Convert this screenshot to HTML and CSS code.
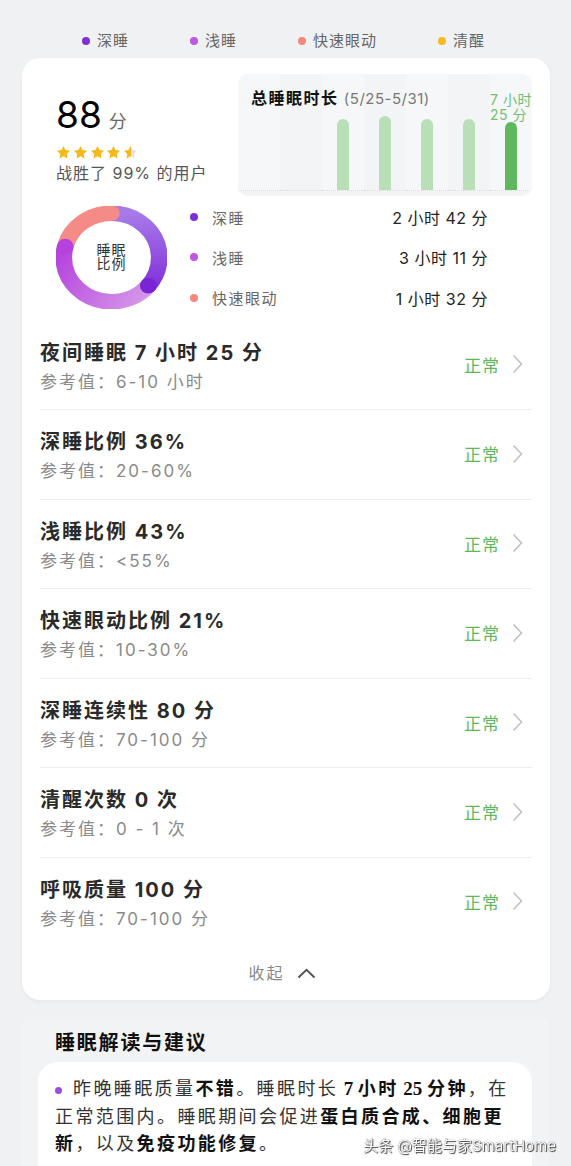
FILE: index.html
```html
<!DOCTYPE html>
<html>
<head>
  <title>睡眠报告</title>
  <meta charset="UTF-8">
  <meta name="viewport" content="width=device-width, initial-scale=1.0">
  <link rel="stylesheet" href="styles.css">
</head>
<body>
  <div class="legend">
    <span class="legend-item"><i class="dot deep"></i>深睡</span>
    <span class="legend-item"><i class="dot light"></i>浅睡</span>
    <span class="legend-item"><i class="dot rem"></i>快速眼动</span>
    <span class="legend-item"><i class="dot awake"></i>清醒</span>
  </div>

  <main class="card">
    <div class="summary">
      <div class="score">
        <div class="score-value">88<span class="unit">分</span></div>
        <div class="stars">
          <svg width="0" height="0" class="defs">
            <defs>
              <linearGradient id="half-star">
                <stop offset="55%" stop-color="#f6b91c"/>
                <stop offset="55%" stop-color="#e2e2e2"/>
              </linearGradient>
            </defs>
          </svg>
          <svg class="star" viewBox="0 0 24 24"><path d="M12 1.5l3.2 6.6 7.2 1-5.2 5.1 1.3 7.2L12 18l-6.5 3.4 1.3-7.2L1.6 9.1l7.2-1z"/></svg>
          <svg class="star" viewBox="0 0 24 24"><path d="M12 1.5l3.2 6.6 7.2 1-5.2 5.1 1.3 7.2L12 18l-6.5 3.4 1.3-7.2L1.6 9.1l7.2-1z"/></svg>
          <svg class="star" viewBox="0 0 24 24"><path d="M12 1.5l3.2 6.6 7.2 1-5.2 5.1 1.3 7.2L12 18l-6.5 3.4 1.3-7.2L1.6 9.1l7.2-1z"/></svg>
          <svg class="star" viewBox="0 0 24 24"><path d="M12 1.5l3.2 6.6 7.2 1-5.2 5.1 1.3 7.2L12 18l-6.5 3.4 1.3-7.2L1.6 9.1l7.2-1z"/></svg>
          <svg class="star half" viewBox="0 0 24 24"><path d="M12 1.5l3.2 6.6 7.2 1-5.2 5.1 1.3 7.2L12 18l-6.5 3.4 1.3-7.2L1.6 9.1l7.2-1z"/></svg>
        </div>
        <div class="beat">战胜了 99% 的用户</div>
      </div>

      <div class="chart">
        <div class="chart-title">总睡眠时长 <span class="range">(5/25-5/31)</span></div>
        <div class="chart-cols">
          <div class="col"></div>
          <div class="col"></div>
          <div class="col"><div class="bar" style="height: 71px"></div></div>
          <div class="col"><div class="bar" style="height: 74px"></div></div>
          <div class="col"><div class="bar" style="height: 71px"></div></div>
          <div class="col"><div class="bar" style="height: 71px"></div></div>
          <div class="col">
            <div class="bar-label">7 小时<br>25 分</div>
            <div class="bar today" style="height: 68px"></div>
          </div>
        </div>
      </div>
    </div>

    <div class="ratio">
      <div class="donut">
        <svg class="donut-ring" viewBox="0 0 100 100" preserveAspectRatio="none">
          <defs>
            <linearGradient id="deep-grad" x1="0" y1="0" x2="0" y2="1">
              <stop offset="0" stop-color="#a77ae9"/>
              <stop offset="1" stop-color="#7a22d6"/>
            </linearGradient>
            <linearGradient id="light-grad" x1="1" y1="1" x2="0" y2="0.3">
              <stop offset="0" stop-color="#d9a2ea"/>
              <stop offset="1" stop-color="#b43fdd"/>
            </linearGradient>
          </defs>
          <circle cx="50" cy="50" r="43" fill="none" stroke="url(#deep-grad)" stroke-width="15" stroke-dasharray="97.26 172.92" stroke-dashoffset="67.54"/>
          <circle cx="50" cy="50" r="43" fill="none" stroke="url(#light-grad)" stroke-width="15" stroke-dasharray="116.18 154" stroke-dashoffset="-29.72"/>
          <circle cx="50" cy="50" r="43" fill="none" stroke="#f58b86" stroke-width="15" stroke-dasharray="56.74 213.44" stroke-dashoffset="-145.9"/>
          <!-- round ends -->
          <circle cx="83.13" cy="77.41" r="7.5" fill="#7a24d7"/>
          <circle cx="8.35" cy="39.31" r="7.5" fill="#b642de"/>
          <circle cx="50" cy="7" r="7.5" fill="#f58b86"/>
        </svg>
        <div class="donut-text">睡眠<br>比例</div>
      </div>
      <ul class="ratio-list">
        <li><i class="dot deep"></i><span class="name">深睡</span><span class="value">2 小时 42 分</span></li>
        <li><i class="dot light"></i><span class="name">浅睡</span><span class="value">3 小时 11 分</span></li>
        <li><i class="dot rem"></i><span class="name">快速眼动</span><span class="value">1 小时 32 分</span></li>
      </ul>
    </div>

    <ul class="metrics">
      <li class="metric">
        <div><div class="metric-title">夜间睡眠 7 小时 25 分</div><div class="metric-ref">参考值：6-10 小时</div></div>
        <div class="status">正常<svg width="11" height="20" viewBox="0 0 11 20"><path d="M1.5 1.5L9.5 10L1.5 18.5"/></svg></div>
      </li>
      <li class="metric">
        <div><div class="metric-title">深睡比例 36%</div><div class="metric-ref">参考值：20-60%</div></div>
        <div class="status">正常<svg width="11" height="20" viewBox="0 0 11 20"><path d="M1.5 1.5L9.5 10L1.5 18.5"/></svg></div>
      </li>
      <li class="metric">
        <div><div class="metric-title">浅睡比例 43%</div><div class="metric-ref">参考值：&lt;55%</div></div>
        <div class="status">正常<svg width="11" height="20" viewBox="0 0 11 20"><path d="M1.5 1.5L9.5 10L1.5 18.5"/></svg></div>
      </li>
      <li class="metric">
        <div><div class="metric-title">快速眼动比例 21%</div><div class="metric-ref">参考值：10-30%</div></div>
        <div class="status">正常<svg width="11" height="20" viewBox="0 0 11 20"><path d="M1.5 1.5L9.5 10L1.5 18.5"/></svg></div>
      </li>
      <li class="metric">
        <div><div class="metric-title">深睡连续性 80 分</div><div class="metric-ref">参考值：70-100 分</div></div>
        <div class="status">正常<svg width="11" height="20" viewBox="0 0 11 20"><path d="M1.5 1.5L9.5 10L1.5 18.5"/></svg></div>
      </li>
      <li class="metric">
        <div><div class="metric-title">清醒次数 0 次</div><div class="metric-ref">参考值：0 - 1 次</div></div>
        <div class="status">正常<svg width="11" height="20" viewBox="0 0 11 20"><path d="M1.5 1.5L9.5 10L1.5 18.5"/></svg></div>
      </li>
      <li class="metric">
        <div><div class="metric-title">呼吸质量 100 分</div><div class="metric-ref">参考值：70-100 分</div></div>
        <div class="status">正常<svg width="11" height="20" viewBox="0 0 11 20"><path d="M1.5 1.5L9.5 10L1.5 18.5"/></svg></div>
      </li>
    </ul>

    <div class="collapse">收起<svg width="19" height="11" viewBox="0 0 19 11"><path d="M1.5 9.5L9.5 1.8L17.5 9.5"/></svg></div>
  </main>

  <section class="advice">
    <h2>睡眠解读与建议</h2>
    <div class="advice-card">
      <p><i class="bullet"></i>昨晚睡眠质量<b>不错</b>。睡眠时长 <b><span class="num">7</span> 小时 <span class="num">25</span> 分钟</b>，在正常范围内。睡眠期间会促进<b>蛋白质合成、细胞更新</b>，以及<b>免疫功能修复</b>。</p>
    </div>
  </section>

  <div class="watermark">头条 @智能与家SmartHome</div>
</body>
</html>
```

FILE: styles.css
```css
body {
  margin: 0;
  padding-top: 30px;
  background: #eff1f3;
  font-family: Inter, "Noto Sans CJK SC", sans-serif;
  color: #222;
}
ul {
  list-style: none;
  margin: 0;
  padding: 0;
}
.dot {
  display: inline-block;
  width: 8px;
  height: 8px;
  border-radius: 50%;
}
.dot.deep { background: #7d2fd8; }
.dot.light { background: #c057df; }
.dot.rem { background: #f5877c; }
.dot.awake { background: #f5b921; }

.legend {
  display: flex;
  gap: 61px;
  padding-left: 82px;
  font-size: 15px;
  line-height: 22px;
  letter-spacing: 1px;
  color: #666;
}
.legend-item {
  display: flex;
  align-items: center;
  gap: 7px;
}

.card {
  margin: 6px 21px 0 22px;
  padding: 16px 18px 16px;
  background: #fff;
  border-radius: 18px;
  box-shadow: 0 2px 4px rgba(0, 0, 0, 0.04);
}
.summary {
  display: flex;
}
.score {
  flex: 1;
  padding: 21px 0 0 16px;
}
.score-value {
  font-size: 37px;
  line-height: 40px;
  color: #000;
}
.unit {
  margin-left: 7px;
  font-size: 18px;
  color: #666;
}
.stars {
  display: flex;
  gap: 1.8px;
  margin-top: 3px;
}
.defs {
  position: absolute;
}
.star {
  width: 15px;
  height: 15px;
  fill: #f6b91c;
}
.star.half {
  fill: url(#half-star);
}
.beat {
  margin-top: 2px;
  font-size: 16px;
  line-height: 22px;
  letter-spacing: 1px;
  color: #555;
}

.chart {
  display: grid;
  width: 294px;
  height: 122px;
  border-radius: 10px;
  background: #f3f4f6;
  overflow: hidden;
}
.chart-title,
.chart-cols {
  grid-area: 1 / 1;
}
.chart-title {
  z-index: 1;
  padding: 14px 0 0 13px;
  font-size: 16px;
  line-height: 20px;
  font-weight: 700;
  letter-spacing: 1.5px;
  color: #111;
}
.range {
  font-size: 15px;
  font-weight: 400;
  letter-spacing: 0.5px;
  color: #777;
}
.chart-cols {
  display: flex;
  padding-bottom: 5px;
}
.col {
  flex: 1;
  display: flex;
  flex-direction: column;
  align-items: center;
  justify-content: flex-end;
  border-bottom: 1px dotted #d9dbde;
}
.col:nth-child(odd) {
  background: #f6f7f9;
}
.bar {
  width: 12px;
  border-radius: 6px 6px 0 0;
  background: #b9dfb7;
}
.bar.today {
  background: #5fb75e;
}
.bar-label {
  font-size: 14px;
  line-height: 15px;
  letter-spacing: 0.5px;
  white-space: nowrap;
  color: #72c072;
}

.ratio {
  display: flex;
  align-items: center;
  margin-top: 1px;
}
.donut {
  display: grid;
  flex: none;
  width: 111px;
  height: 103px;
  margin: 0 23px 0 16px;
}
.donut-ring,
.donut-text {
  grid-area: 1 / 1;
}
.donut-ring {
  width: 111px;
  height: 103px;
}
.donut-text {
  place-self: center;
  font-size: 14px;
  line-height: 14px;
  letter-spacing: 1px;
  text-align: center;
  color: #333;
}
.ratio-list {
  flex: 1;
  padding-right: 44px;
}
.ratio-list li {
  display: flex;
  align-items: center;
  height: 40.3px;
}
.ratio-list .dot {
  margin-right: 14px;
}
.name {
  flex: 1;
  font-size: 15px;
  letter-spacing: 1.5px;
  color: #666;
}
.value {
  font-size: 16px;
  letter-spacing: 0.5px;
  color: #222;
}

.metrics {
  margin-top: 3px;
}
.metric {
  display: flex;
  justify-content: space-between;
  align-items: center;
  padding: 19px 9px 14.5px 0;
  border-bottom: 1px solid #ededed;
}
.metric:last-child {
  border-bottom: 0;
}
.metric-title {
  font-size: 20px;
  line-height: 26px;
  font-weight: 700;
  letter-spacing: 2px;
  color: #2a2a2a;
}
.metric-ref {
  margin-top: 3px;
  font-size: 17px;
  line-height: 26px;
  letter-spacing: 2px;
  color: #8a8a8a;
}
.status {
  display: flex;
  align-items: center;
  gap: 12px;
  margin-bottom: 6px;
  font-size: 17px;
  letter-spacing: 1px;
  color: #5fb760;
}
.status path {
  fill: none;
  stroke: #c2c2c2;
  stroke-width: 1.6;
}

.collapse {
  display: flex;
  justify-content: center;
  align-items: center;
  gap: 12px;
  margin-top: 16px;
  padding-right: 8px;
  font-size: 16px;
  line-height: 22px;
  letter-spacing: 2px;
  color: #888;
}
.collapse path {
  fill: none;
  stroke: #555;
  stroke-width: 2;
}

.advice {
  margin: 20px 22px 0;
  padding: 8px 17px 0 16px;
  background: #f2f3f5;
}
.advice h2 {
  margin: 0;
  padding-left: 17px;
  font-size: 20px;
  line-height: 30px;
  font-weight: 700;
  letter-spacing: 1.8px;
  color: #111;
}
.advice-card {
  margin-top: 4px;
  padding: 13px 17px 20px;
  border-radius: 20px 20px 0 0;
  background: #fff;
}
.advice-card p {
  margin: 0;
  font-size: 18px;
  line-height: 27.5px;
  letter-spacing: 2.4px;
  word-spacing: -2px;
  color: #333;
}
.advice-card b {
  color: #111;
}
.bullet {
  display: inline-block;
  width: 7px;
  height: 7px;
  margin-right: 11px;
  border-radius: 50%;
  background: #9b4de0;
  vertical-align: middle;
}
.num {
  font-family: "Liberation Serif", serif;
  font-size: 19px;
  letter-spacing: 0;
}

.watermark {
  position: fixed;
  right: 15px;
  bottom: 11px;
  font-size: 15px;
  color: #fff;
  text-shadow: 0 0 1px #333, 1px 1px 1px #444;
}
```
